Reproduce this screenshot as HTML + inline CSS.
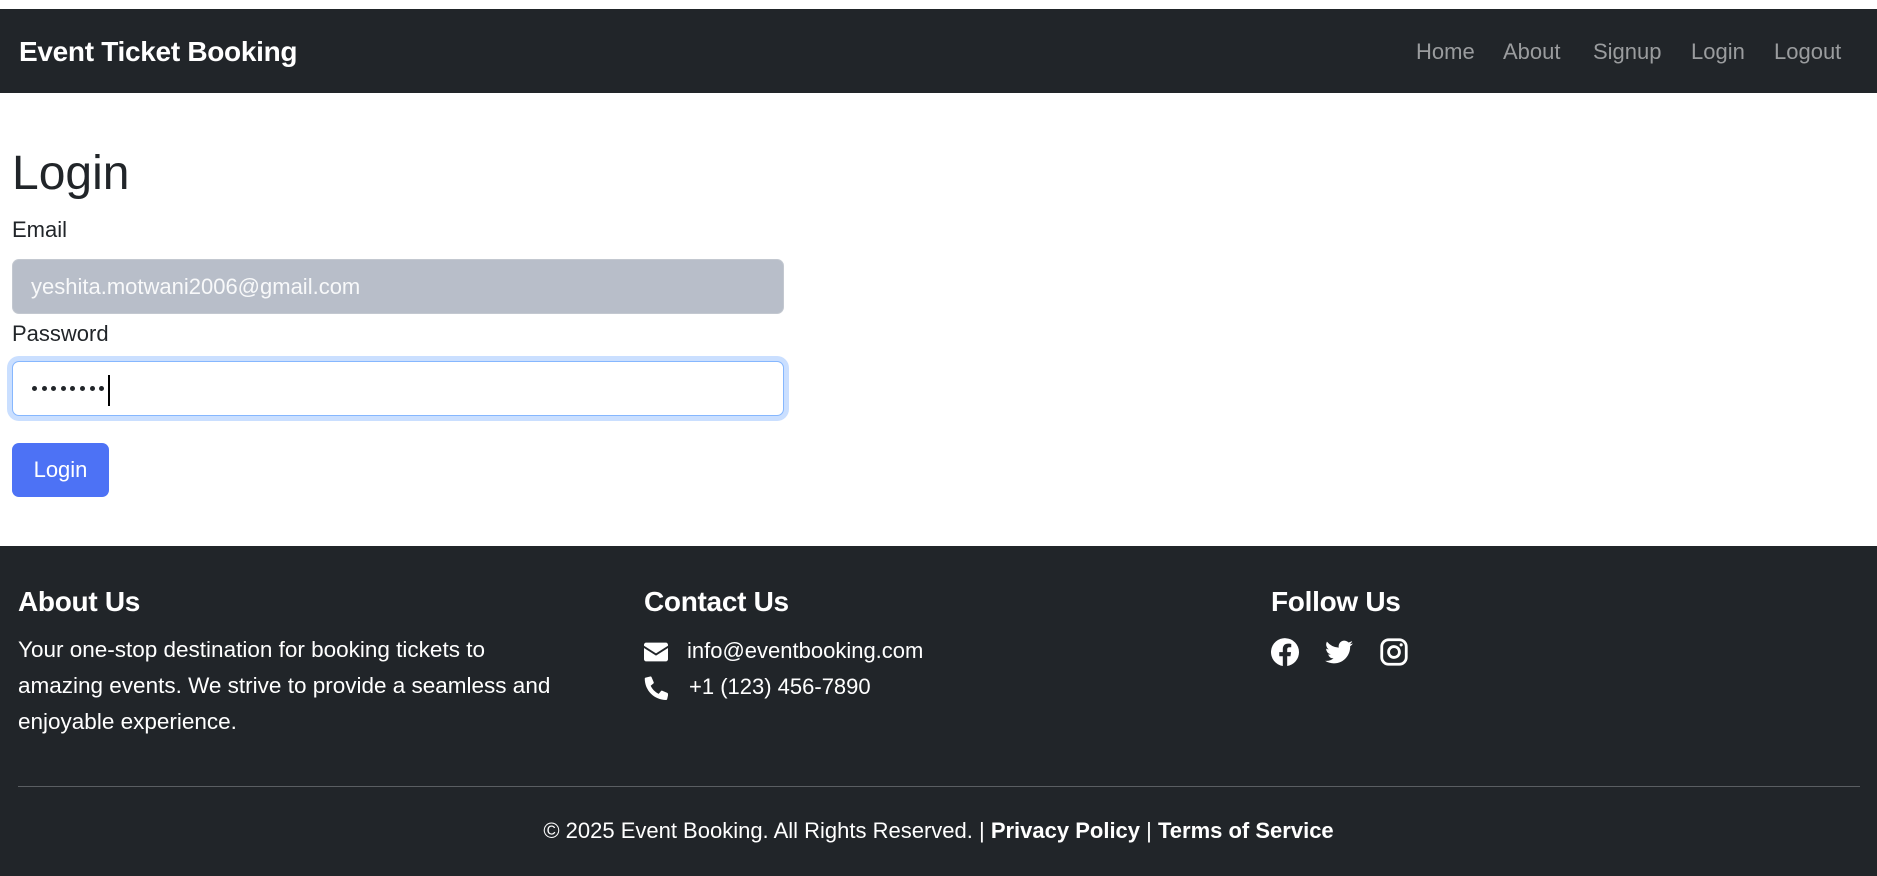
<!DOCTYPE html>
<html><head><meta charset="utf-8"><style>
*{box-sizing:border-box;margin:0;padding:0}
body{width:1877px;height:876px;overflow:hidden;background:#fff;font-family:"Liberation Sans",sans-serif;color:#212529;position:relative}
.a{position:absolute;white-space:nowrap;line-height:1}
nav{position:absolute;top:9px;left:0;width:1877px;height:84px;background:#212529}
.brand{left:19px;top:29px;font-size:28px;color:#fff;font-weight:bold;letter-spacing:-0.3px}
.nl{top:32px;font-size:22px;color:#9a9c9e}
.inp{position:absolute;left:12px;width:772px;height:55px;border-radius:7px}
footer{position:absolute;top:546px;left:0;width:1877px;height:330px;background:#212529;color:#fff}
h4{position:absolute;font-size:28px;font-weight:bold;line-height:1;color:#fff;letter-spacing:-0.3px}
.t{font-size:22px;color:#fff}
.dots{position:absolute;left:32px;top:386px;display:flex;gap:4.6px}
.dots i{display:block;width:5px;height:5px;border-radius:50%;background:#212529}
</style></head><body>
<nav>
<div class="a brand">Event Ticket Booking</div>
<div class="a nl" style="left:1416px">Home</div>
<div class="a nl" style="left:1503px">About</div>
<div class="a nl" style="left:1593px">Signup</div>
<div class="a nl" style="left:1691px">Login</div>
<div class="a nl" style="left:1774px">Logout</div>
</nav>
<div class="a" style="left:12px;top:150px;font-size:48px;font-weight:normal">Login</div>
<div class="a" style="left:12px;top:219px;font-size:22px">Email</div>
<div class="inp" style="top:259px;background:#b8bec9;border:1px solid #c3c8d0"></div>
<div class="a" style="left:31px;top:276px;font-size:22px;color:#f8f9fa">yeshita.motwani2006@gmail.com</div>
<div class="a" style="left:12px;top:323px;font-size:22px">Password</div>
<div class="inp" style="top:361px;background:#fff;border:1px solid #86b7fe;box-shadow:0 0 0 5px rgba(13,110,253,.22)"></div>
<div class="dots"><i></i><i></i><i></i><i></i><i></i><i></i><i></i><i></i></div>
<div style="position:absolute;left:108px;top:375px;width:2px;height:31px;background:#000"></div>
<div style="position:absolute;left:12px;top:443px;width:97px;height:54px;background:#4d72f5;border-radius:7px;color:#fff;font-size:22px;text-align:center;line-height:54px">Login</div>
<footer>
<h4 style="left:18px;top:42px">About Us</h4>
<div class="a t" style="left:18px;top:86px;line-height:36px;white-space:normal;width:620px;font-size:22.5px">Your one-stop destination for booking tickets to<br>amazing events. We strive to provide a seamless and<br>enjoyable experience.</div>
<h4 style="left:644px;top:42px">Contact Us</h4>
<svg style="position:absolute;left:644px;top:96px" width="24" height="20" viewBox="0 0 512 400"><path fill="#fff" d="M48 0h416c26 0 48 22 48 48v19L256 230 0 67V48C0 22 22 0 48 0zM0 114l256 163 256-163v238c0 26-22 48-48 48H48c-26 0-48-22-48-48z"/></svg>
<div class="a t" style="left:687px;top:94px">info@eventbooking.com</div>
<svg style="position:absolute;left:644px;top:130px" width="24" height="24" viewBox="0 0 512 512"><path fill="#fff" d="M497 361l-108-46c-10-4-22-1-28 7l-48 58c-75-35-136-96-171-171l58-48c9-7 11-18 7-28L161 25c-5-11-16-17-27-14L34 34C23 37 16 46 16 57c0 252 204 455 455 455 11 0 20-7 23-18l23-100c3-12-3-23-14-27z"/></svg>
<div class="a t" style="left:689px;top:130px">+1 (123) 456-7890</div>
<h4 style="left:1271px;top:42px">Follow Us</h4>
<svg style="position:absolute;left:1271px;top:92px" width="28" height="28" viewBox="0 0 16 16"><path fill="#fff" d="M16 8.05A8 8 0 1 0 6.75 16v-5.6H4.720V8.05h2.03V6.3c0-2 1.2-3.12 3.02-3.12.88 0 1.8.16 1.8.16v1.970h-1.01c-1 0-1.31.62-1.31 1.26v1.5h2.22l-.35 2.34H9.25V16A8 8 0 0 0 16 8.05z"/></svg>
<svg style="position:absolute;left:1325px;top:92px" width="28" height="28" viewBox="0 0 16 16"><path fill="#fff" d="M5.03 14.5c6.04 0 9.34-5 9.34-9.340v-.42A6.7 6.7 0 0 0 16 3.04a6.5 6.5 0 0 1-1.89.52A3.3 3.3 0 0 0 15.55 1.74a6.6 6.6 0 0 1-2.08.8A3.28 3.28 0 0 0 7.88 5.53 9.3 9.3 0 0 1 1.11 2.1a3.28 3.28 0 0 0 1.02 4.38A3.3 3.3 0 0 1 .64 6.07v.04a3.28 3.28 0 0 0 2.63 3.22 3.3 3.3 0 0 1-1.48.06 3.29 3.29 0 0 0 3.07 2.28A6.6 6.6 0 0 1 0 13.03a9.3 9.3 0 0 0 5.03 1.47z"/></svg>
<svg style="position:absolute;left:1380px;top:92px" width="28" height="28" viewBox="0 0 16 16"><rect x="1" y="1" width="14" height="14" rx="4" fill="none" stroke="#fff" stroke-width="1.6"/><circle cx="8" cy="8" r="3.1" fill="none" stroke="#fff" stroke-width="1.6"/><circle cx="12.1" cy="3.9" r=".9" fill="#fff"/></svg>
<div style="position:absolute;left:18px;top:240px;width:1842px;height:1px;background:#5a5e62"></div>
<div class="a t" style="left:0;width:1877px;text-align:center;top:274px">© 2025 Event Booking. All Rights Reserved. | <b>Privacy Policy</b> | <b>Terms of Service</b></div>
</footer>
</body></html>
